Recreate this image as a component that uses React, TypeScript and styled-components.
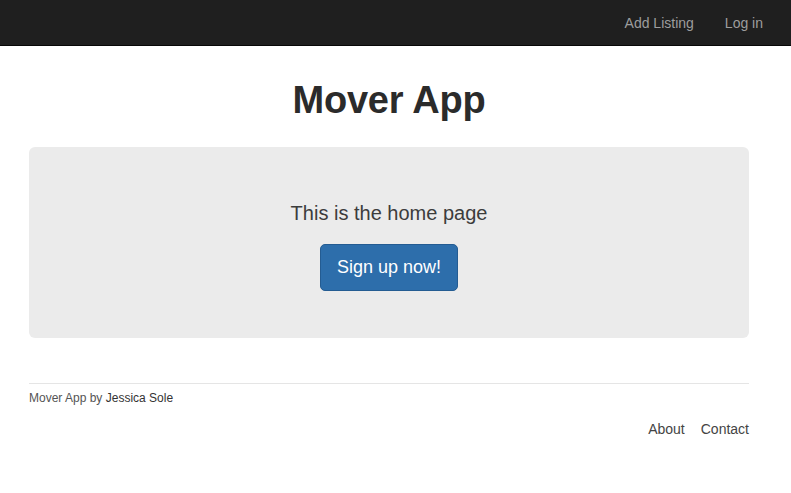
import * as React from "react";
import styled, { createGlobalStyle } from "styled-components";

const GlobalStyle = createGlobalStyle`
  html, body {
    margin: 0;
    padding: 0;
    background: #ffffff;
    font-family: "Liberation Sans", Arial, sans-serif;
    color: #333333;
  }
`;

const Navbar = styled.nav`
  height: 45px;
  background-color: #1f1f1f;
  border-bottom: 1px solid #080808;
  display: flex;
  justify-content: flex-end;
  align-items: center;
  padding-right: 28px;
  gap: 31px;
`;

const NavLink = styled.a`
  color: #9d9d9d;
  font-size: 14px;
  text-decoration: none;
  cursor: pointer;
`;

const Container = styled.div`
  width: 720px;
  margin-left: 29px;
`;

const Title = styled.h1`
  margin: 30px 0 23px;
  text-align: center;
  font-size: 38px;
  font-weight: 700;
  line-height: 48px;
  color: #2b2b2b;
  letter-spacing: -0.2px;
`;

const Jumbotron = styled.section`
  height: 191px;
  background-color: #ebebeb;
  border-radius: 6px;
  display: flex;
  flex-direction: column;
  align-items: center;
  padding-top: 53px;
  box-sizing: border-box;
`;

const Lead = styled.p`
  margin: 0 0 18px;
  font-size: 20px;
  font-weight: 400;
  line-height: 26px;
  color: #3c3c3c;
`;

const PrimaryButton = styled.button`
  width: 138px;
  height: 47px;
  background-color: #2d6eab;
  border: 1px solid #245c92;
  border-radius: 5px;
  color: #ffffff;
  font-family: inherit;
  font-size: 18px;
  cursor: pointer;
`;

const Footer = styled.footer`
  margin-top: 45px;
  border-top: 1px solid #e5e5e5;
  padding-top: 6px;
`;

const Credit = styled.p`
  margin: 0;
  font-size: 12px;
  line-height: 16px;
  color: #555555;
`;

const Author = styled.span`
  color: #333333;
`;

const FooterLinks = styled.div`
  display: flex;
  justify-content: flex-end;
  gap: 16px;
  margin-top: 15px;
`;

const FooterLink = styled.a`
  font-size: 14px;
  color: #444444;
  text-decoration: none;
  cursor: pointer;
`;

export default function App() {
  return (
    <>
      <GlobalStyle />
      <Navbar>
        <NavLink>Add Listing</NavLink>
        <NavLink>Log in</NavLink>
      </Navbar>
      <Container>
        <Title>Mover App</Title>
        <Jumbotron>
          <Lead>This is the home page</Lead>
          <PrimaryButton>Sign up now!</PrimaryButton>
        </Jumbotron>
        <Footer>
          <Credit>
            Mover App by <Author>Jessica Sole</Author>
          </Credit>
          <FooterLinks>
            <FooterLink>About</FooterLink>
            <FooterLink>Contact</FooterLink>
          </FooterLinks>
        </Footer>
      </Container>
    </>
  );
}
